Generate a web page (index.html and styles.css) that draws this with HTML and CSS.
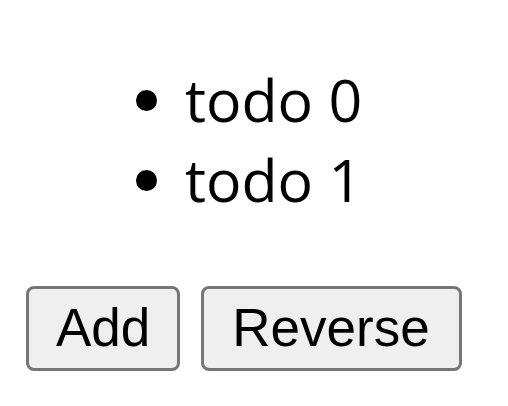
FILE: index.html
```html
<!DOCTYPE html>
<html>
<head>
<meta charset="utf-8">
<link rel="stylesheet" href="styles.css">
</head>
<body>
<div class="app">
  <ul class="todos">
    <li class="todo">todo 0</li>
    <li class="todo">todo 1</li>
  </ul>
  <div class="actions">
    <button class="btn">Add</button>
    <button class="btn btn-wide">Reverse</button>
  </div>
</div>
</body>
</html>
```
FILE: styles.css
```css
html, body {
  margin: 0;
  padding: 0;
  background: #ffffff;
}
.app {
  display: flex;
  flex-direction: column;
}
.todos {
  margin: 59px 0 0 0;
  padding: 0 0 0 185px;
  list-style: disc;
  font-family: "Open Sans", sans-serif;
  font-size: 59px;
  line-height: 80px;
  color: #000;
}
.actions {
  display: flex;
  gap: 21px;
  margin-top: 67px;
  padding-left: 26px;
}
.btn {
  font-family: "Liberation Sans", Arial, sans-serif;
  font-size: 53px;
  line-height: 61px;
  color: #000;
  background: #efefef;
  border: 3px solid #767676;
  border-radius: 8px;
  padding: 8px 27px 10px;
  margin: 0;
}
.btn-wide {
  padding-left: 28px;
  padding-right: 29px;
}
```
